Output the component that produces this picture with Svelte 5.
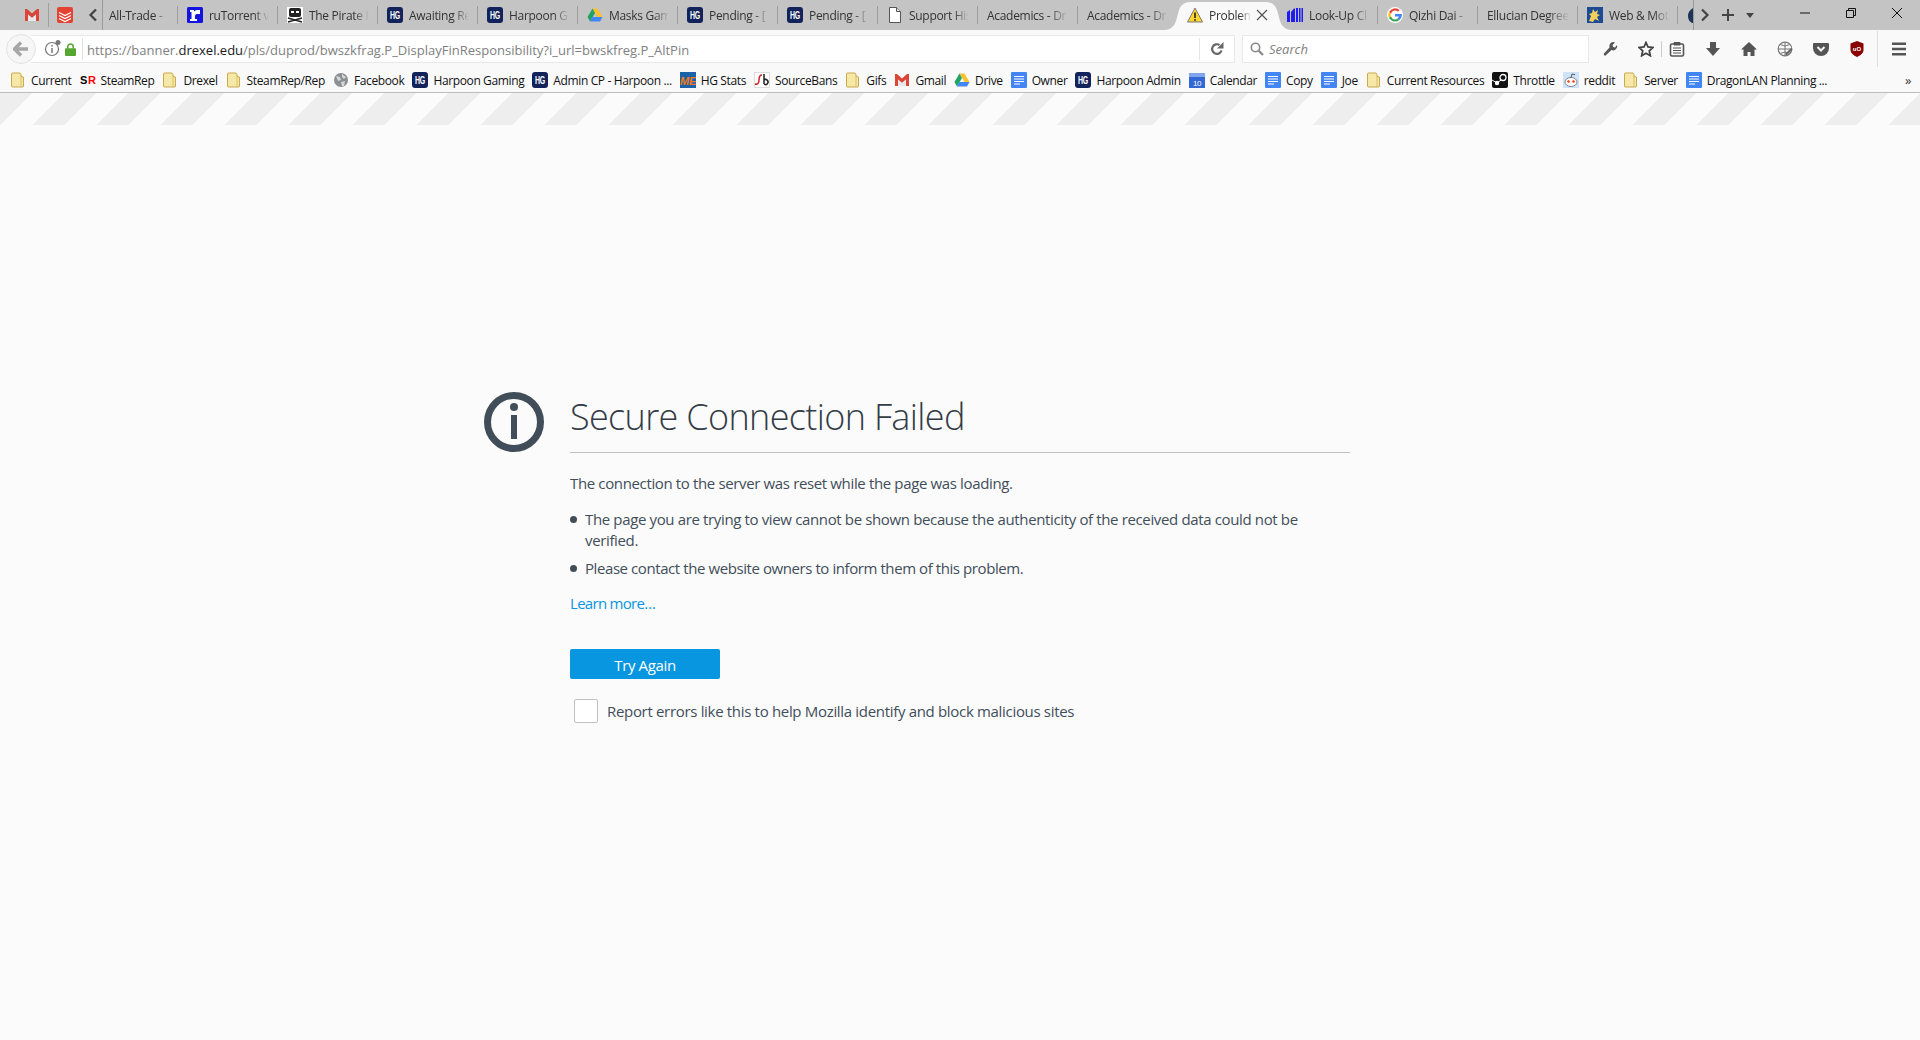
<script>
  const tabs = [
    { label: 'All-Trade - ', first: true },
    { icon: 'rutorrent', label: 'ruTorrent v' },
    { icon: 'pirate', label: 'The Pirate B' },
    { icon: 'hg', label: 'Awaiting Re' },
    { icon: 'hg', label: 'Harpoon G' },
    { icon: 'drive', label: 'Masks Gam' },
    { icon: 'hg', label: 'Pending - [' },
    { icon: 'hg', label: 'Pending - [' },
    { icon: 'page', label: 'Support His' },
    { label: 'Academics - Dr' },
    { label: 'Academics - Dr' },
    { icon: 'warn', label: 'Problem', active: true },
    { icon: 'lookup', label: 'Look-Up Cl' },
    { icon: 'google', label: 'Qizhi Dai - ' },
    { label: 'Ellucian Degree' },
    { icon: 'dragon', label: 'Web & Mot' },
    { icon: 'dark', label: '' }
  ];

  const bookmarks = [
    { icon: 'folder', label: 'Current' },
    { icon: 'sr', label: 'SteamRep' },
    { icon: 'folder', label: 'Drexel' },
    { icon: 'folder', label: 'SteamRep/Rep' },
    { icon: 'globe', label: 'Facebook' },
    { icon: 'hg', label: 'Harpoon Gaming' },
    { icon: 'hg', label: 'Admin CP - Harpoon ...' },
    { icon: 'me', label: 'HG Stats' },
    { icon: 'sb', label: 'SourceBans' },
    { icon: 'folder', label: 'Gifs' },
    { icon: 'gmail', label: 'Gmail' },
    { icon: 'drive', label: 'Drive' },
    { icon: 'doc', label: 'Owner' },
    { icon: 'hg', label: 'Harpoon Admin' },
    { icon: 'cal', label: 'Calendar' },
    { icon: 'doc', label: 'Copy' },
    { icon: 'doc', label: 'Joe' },
    { icon: 'folder', label: 'Current Resources' },
    { icon: 'steam', label: 'Throttle' },
    { icon: 'reddit', label: 'reddit' },
    { icon: 'folder', label: 'Server' },
    { icon: 'doc', label: 'DragonLAN Planning ...' }
  ];
</script>

{#snippet icon(kind)}
  <svg class="ico" viewBox="0 0 16 16" width="16" height="16">
    {#if kind === 'hg'}
      <rect width="16" height="16" rx="3" fill="#12235c" />
      <text x="8" y="12" font-size="11" font-weight="700" text-anchor="middle" fill="#fff" font-family="Liberation Sans" textLength="10" lengthAdjust="spacingAndGlyphs">HG</text>
    {:else if kind === 'folder'}
      <path d="M1.500 2a1 1 0 0 1 1-1h7.500l1 1.500v2l2.500.5v9a1 1 0 0 1-1 1h-10a1 1 0 0 1-1-1z" fill="#f6e8a6" stroke="#c9a94e" />
      <path d="M11 3v11.500" stroke="#d9bf6c" />
    {:else if kind === 'sr'}
      <text x="0" y="12" font-size="11" font-weight="700" fill="#000" font-family="Liberation Sans">S</text>
      <text x="8" y="12" font-size="11" font-weight="700" fill="#f00" font-family="Liberation Sans">R</text>
    {:else if kind === 'globe'}
      <circle cx="8" cy="8" r="7" fill="#8a8f94" />
      <path d="M3 4l4 1 1 3-3 1zM9 2l4 3-2 2-2-2zM8 10l4-1-1 5-2 0z" fill="#d5d7d9" />
    {:else if kind === 'me'}
      <rect width="16" height="16" fill="#1b62a8" />
      <text x="8" y="12.500" font-size="11" font-style="italic" font-weight="700" text-anchor="middle" fill="#f27a1a" font-family="Liberation Sans">ME</text>
    {:else if kind === 'sb'}
      <rect x=".5" y=".5" width="15" height="15" fill="#fff" stroke="#ddd" />
      <path d="M1 12q4 1 4-4t3-5" fill="none" stroke="#c22" stroke-width="1.500" />
      <path d="M10 2v10M10 8a2.500 2.500 0 1 1 0 4" fill="none" stroke="#222" stroke-width="1.500" />
    {:else if kind === 'gmail'}
      <path d="M1 2h2l5 4.500L13 2h2v12h-3V7.500L8 11 4 7.500V14H1z" fill="#db4437" />
      <path d="M4 7.500L8 11l4-3.500V14H4z" fill="#e8e8e8" />
    {:else if kind === 'drive'}
      <path d="M5.500 1.500h5l5 8.500h-5z" fill="#fbc02d" />
      <path d="M5.500 1.500L.5 10 3 14.500 8 6z" fill="#1fa463" />
      <path d="M5.500 10h10L13 14.500H3z" fill="#4285f4" />
    {:else if kind === 'doc'}
      <rect width="16" height="16" rx="1" fill="#4285f4" />
      <path d="M3 4.500h10M3 7h10M3 9.500h10M3 12h6" stroke="#fff" />
    {:else if kind === 'cal'}
      <rect y="1" width="16" height="15" fill="#3367d6" />
      <rect y="1" width="16" height="4" fill="#7fa6ec" />
      <text x="8" y="13.500" font-size="8" text-anchor="middle" fill="#fff" font-family="Liberation Sans">10</text>
    {:else if kind === 'steam'}
      <rect width="16" height="16" rx="2" fill="#111" />
      <circle cx="11" cy="5.500" r="3" fill="none" stroke="#fff" stroke-width="1.300" />
      <circle cx="5" cy="11" r="2.200" fill="#fff" />
      <path d="M0 8l5 3 4-3" fill="none" stroke="#fff" />
    {:else if kind === 'reddit'}
      <rect width="16" height="16" fill="#cee3f8" />
      <ellipse cx="8" cy="10" rx="6" ry="4.500" fill="#fff" stroke="#555" stroke-width=".7" />
      <circle cx="5.500" cy="9.500" r="1.200" fill="#f30" />
      <circle cx="10.500" cy="9.500" r="1.200" fill="#f30" />
      <path d="M8 5.500l1-3.500 3 .7" fill="none" stroke="#555" />
    {:else if kind === 'rutorrent'}
      <rect width="16" height="16" rx="1.500" fill="#1414e0" />
      <path d="M3 3h4v1.500q1-1.500 3-1.500h3v4h-3q-2 0-2 2v3h2v2H3v-2h1.500V5H3z" fill="#fff" />
    {:else if kind === 'pirate'}
      <rect width="16" height="16" fill="#fff" />
      <rect x="2" y="1" width="12" height="9" rx="2" fill="#222" />
      <rect x="4" y="4" width="3" height="2" fill="#fff" />
      <rect x="9" y="4" width="3" height="2" fill="#fff" />
      <path d="M1 11l14 4M15 11L1 15" stroke="#222" stroke-width="1.600" />
    {:else if kind === 'page'}
      <path d="M2.500.5h7l4 4v11h-11z" fill="#fff" stroke="#555" />
      <path d="M9.500.5v4h4" fill="#ddd" stroke="#555" />
    {:else if kind === 'warn'}
      <path d="M8 1l7.500 14H.5z" fill="#ffd52e" stroke="#777" />
      <path d="M8 5.500v5.500" stroke="#222" stroke-width="1.600" />
      <circle cx="8" cy="13" r=".9" fill="#222" />
    {:else if kind === 'lookup'}
      <path d="M0 5l3-2v12H0z" fill="#1d1df0" />
      <path d="M4 5l3-3.500h1V15H4z" fill="#1d1df0" />
      <path d="M9 1h2v14H9zM12 1h1.500v14H12zM14.500 1H16v14h-1.500z" fill="#1d1df0" />
    {:else if kind === 'google'}
      <circle cx="8" cy="8" r="8" fill="#fff" />
      <path d="M8 3.500a4.500 4.500 0 0 1 3 1.200L12.600 3A7 7 0 0 0 2 5l2 1.500A4.500 4.500 0 0 1 8 3.500z" fill="#ea4335" />
      <path d="M3.500 8c0-.5.100-1 .5-1.500L2 5a7 7 0 0 0 0 6l2-1.500c-.4-.5-.5-1-.5-1.500z" fill="#fbbc05" />
      <path d="M8 12.500A4.500 4.500 0 0 1 4 9.500L2 11a7 7 0 0 0 10.500 2l-2-1.500c-.6.600-1.500 1-2.500 1z" fill="#34a853" />
      <path d="M15 7H8v2.500h4c-.2.800-.8 1.500-1.500 2l2 1.500c1.500-1.300 2.500-3.500 2.500-6z" fill="#4285f4" />
    {:else if kind === 'dragon'}
      <rect width="16" height="16" fill="#1c4a94" />
      <path d="M2 14l2-5-2-2 3-1 1-4 2 3 3-2-1 4 3 1-3 2 2 4-4-2-2 3z" fill="#f3cf5c" />
    {:else if kind === 'dark'}
      <path d="M6 1q-5 3-5 8t4 7h6V1z" fill="#1d3557" />
    {:else if kind === 'todoist'}
      <rect width="16" height="16" rx="2" fill="#e44332" />
      <path d="M2 5.500l6 3 6-3M2 8.500l6 3 6-3M2 11.500l6 3 6-3" fill="none" stroke="#fff" stroke-width="1.200" />
    {/if}
  </svg>
{/snippet}

<div class="browser">
  <div class="tabbar">
    <div class="pinned">
      <span class="pin gmail">{@render icon('gmail')}</span>
      <span class="pin">{@render icon('todoist')}</span>
    </div>
    <svg class="scroll-arrow" viewBox="0 0 10 14" width="10" height="14"><path d="M8 1.500L2.500 7 8 12.500" fill="none" stroke="#444" stroke-width="2.200" /></svg>
    <div class="strip">
      {#each tabs as tab}
        <div class="tab" class:active={tab.active} class:first={tab.first}>
          {#if tab.active}
            <svg class="tab-shape" viewBox="0 0 128 30" width="128" height="30" preserveAspectRatio="none">
              <path d="M0 30q9 0 12-9l3-11q3-8 11-8h76q8 0 11 8l3 11q3 9 12 9z" fill="#f9f9f9" />
            </svg>
          {/if}
          {#if tab.icon}{@render icon(tab.icon)}{/if}
          <span class="tab-label">{tab.label}</span>
          {#if tab.active}
            <svg class="tab-close" viewBox="0 0 12 12" width="12" height="12"><path d="M1 1l10 10M11 1L1 11" stroke="#555" stroke-width="1.200" /></svg>
          {/if}
        </div>
      {/each}
    </div>
    <svg class="tab-ctl" viewBox="0 0 10 14" width="10" height="14"><path d="M2 1.500L7.500 7 2 12.500" fill="none" stroke="#444" stroke-width="2.200" /></svg>
    <svg class="tab-ctl plus" viewBox="0 0 14 14" width="14" height="14"><path d="M7 1v12M1 7h12" stroke="#444" stroke-width="2" /></svg>
    <svg class="tab-ctl caret" viewBox="0 0 8 5" width="8" height="5"><path d="M0 0h8L4 5z" fill="#444" /></svg>
    <div class="win-ctl">
      <svg viewBox="0 0 10 10" width="10" height="10"><path d="M0 5h10" stroke="#111" /></svg>
      <svg viewBox="0 0 10 10" width="10" height="10"><path d="M.5 2.500h7v7h-7zM2.500 2.500v-2h7v7h-2" fill="none" stroke="#111" /></svg>
      <svg viewBox="0 0 10 10" width="10" height="10"><path d="M0 0l10 10M10 0L0 10" stroke="#111" /></svg>
    </div>
  </div>

  <div class="navbar">
    <div class="back">
      <svg viewBox="0 0 16 16" width="16" height="16"><path d="M8 1.500L1.500 8 8 14.500M2 8h13" fill="none" stroke="#a6a6a6" stroke-width="3.400" /></svg>
    </div>
    <div class="urlbar">
      <svg class="site-info" viewBox="0 0 18 18" width="18" height="18">
        <circle cx="8" cy="10" r="6.500" fill="none" stroke="#777" stroke-width="1.200" />
        <path d="M8 9v5M8 6v1.600" stroke="#777" stroke-width="1.500" />
        <circle cx="14" cy="3.500" r="2.500" fill="#777" />
      </svg>
      <svg class="lock" viewBox="0 0 12 14" width="11" height="13">
        <rect y="5.500" width="12" height="8.500" rx="1" fill="#57a630" />
        <path d="M3 6V4a3 3 0 0 1 6 0v2" fill="none" stroke="#57a630" stroke-width="1.700" />
      </svg>
      <span class="url">https://banner.<b>drexel.edu</b>/pls/duprod/bwszkfrag.P_DisplayFinResponsibility?i_url=bwskfreg.P_AltPin</span>
      <span class="reload">
        <svg viewBox="0 0 14 14" width="14" height="14"><path d="M11.500 8.500A4.800 4.800 0 1 1 9.500 3" fill="none" stroke="#666" stroke-width="2.200" /><path d="M7 6.500h6.500V0z" fill="#666" /></svg>
      </span>
    </div>
    <div class="searchbar">
      <svg viewBox="0 0 14 14" width="14" height="14"><circle cx="5.500" cy="5.500" r="4.200" fill="none" stroke="#888" stroke-width="1.600" /><path d="M8.500 8.500l4.500 4.500" stroke="#888" stroke-width="2.200" /></svg>
      <span>Search</span>
    </div>
    <div class="tools">
      <svg class="t" viewBox="0 0 16 16" width="16" height="16"><path d="M1.500 13l6-6.500a4 4 0 0 1 5.500-5l-2.500 2.500.5 2 2 .5L15 4a4 4 0 0 1-5.500 5L3 15z" fill="#555" /></svg>
      <svg class="t star" viewBox="0 0 16 16" width="16" height="16"><path d="M8 1.500l2 4.500 5 .5-3.700 3.300 1 4.900L8 12.300l-4.300 2.400 1-4.900L1 6.500 6 6z" fill="none" stroke="#444" stroke-width="1.800" /></svg>
      <i class="tsep"></i>
      <svg class="t" viewBox="0 0 16 16" width="16" height="16"><rect x="1.500" y="3" width="13" height="12" rx="1.500" fill="none" stroke="#555" stroke-width="1.600" /><path d="M5 1.500h6V4H5zM4 7h8M4 9.500h8M4 12h8" fill="#555" stroke="#555" /></svg>
      <svg class="t" viewBox="0 0 16 16" width="16" height="16"><path d="M5 1h6v6h4l-7 8-7-8h4z" fill="#555" /></svg>
      <svg class="t" viewBox="0 0 16 16" width="16" height="16"><path d="M8 1L0 8.500h2.500V15h4v-4h3v4h4V8.500H16z" fill="#555" /></svg>
      <svg class="t" viewBox="0 0 16 16" width="16" height="16"><circle cx="8" cy="8" r="6.800" fill="none" stroke="#777" stroke-width="1.200" /><path d="M1 8h14M8 1v14M3 3.500q5 3 10 0M3 12.500q5-3 10 0" fill="none" stroke="#777" /><path d="M8 13l6-6 1.500 1.500-6 6z" fill="#666" /></svg>
      <svg class="t" viewBox="0 0 16 16" width="16" height="16"><path d="M1 2h14a1 1 0 0 1 1 1v4a8 8 0 0 1-16 0V3a1 1 0 0 1 1-1z" fill="#555" /><path d="M4.500 6L8 9.500 11.500 6" fill="none" stroke="#f9f9f9" stroke-width="2" /></svg>
      <svg class="t" viewBox="0 0 16 16" width="16" height="16"><path d="M8 0l6.500 2.500V9q0 4-6.500 7Q1.500 13 1.500 9V2.500z" fill="#800" /><text x="8" y="10" font-size="6" font-weight="700" text-anchor="middle" fill="#fff" font-family="Liberation Sans">uO</text></svg>
      <i class="tsep wide"></i>
      <svg class="t menu" viewBox="0 0 16 16" width="16" height="14"><path d="M0 2h16M0 8h16M0 14h16" stroke="#555" stroke-width="2.600" /></svg>
    </div>
  </div>

  <div class="bookmarks">
    {#each bookmarks as b}
      <div class="bm">{@render icon(b.icon)}<span>{b.label}</span></div>
    {/each}
    <span class="more">»</span>
  </div>

  <div class="stripes"></div>

  <main class="page">
    <div class="container">
      <div class="title-row">
        <svg class="big-info" viewBox="0 0 60 60" width="60" height="60">
          <circle cx="30" cy="30" r="26.500" fill="none" stroke="#414e5a" stroke-width="7" />
          <circle cx="30" cy="15" r="4" fill="#414e5a" />
          <rect x="27" y="23" width="6" height="24" fill="#414e5a" />
        </svg>
        <h1>Secure Connection Failed</h1>
      </div>
      <p class="lead">The connection to the server was reset while the page was loading.</p>
      <ul>
        <li>The page you are trying to view cannot be shown because the authenticity of the received data could not be verified.</li>
        <li class="tight">Please contact the website owners to inform them of this problem.</li>
      </ul>
      <a class="learn" href="#learn">Learn more…</a>
      <button class="retry">Try Again</button>
      <label class="report">
        <span class="box"></span>
        <span>Report errors like this to help Mozilla identify and block malicious sites</span>
      </label>
    </div>
  </main>
</div>

<style>
  :global(body) {
    margin: 0;
    background: #fbfbfb;
  }

  .browser {
    height: 1040px;
    overflow: hidden;
    font-family: "Open Sans", "Noto Sans", sans-serif;
    background: #fbfbfb;
  }

  .ico {
    flex-shrink: 0;
    display: block;
  }

  /* tab row */
  .tabbar {
    display: flex;
    align-items: center;
    height: 30px;
    background: #c4c4c4;
    position: relative;
  }

  .pinned {
    display: flex;
    align-items: center;
    padding-left: 24px;
    height: 24px;
  }

  .pin {
    padding-right: 8px;
    margin-right: 8px;
    border-right: 1px solid #a0a0a0;
    height: 24px;
    display: flex;
    align-items: center;
  }

  .pin:last-child {
    border-right: 0;
    padding-right: 0;
    margin-right: 0;
  }

  .scroll-arrow {
    margin-left: 15px;
    margin-right: 4px;
    flex-shrink: 0;
  }

  .strip {
    display: flex;
    width: 1592px;
    height: 30px;
    overflow: hidden;
    flex-shrink: 0;
    border-left: 1px solid #999;
    border-right: 1px solid #999;
    box-sizing: border-box;
  }

  .tab {
    position: relative;
    display: flex;
    align-items: center;
    gap: 6px;
    flex: 0 0 100px;
    min-width: 0;
    box-sizing: border-box;
    padding: 0 9px;
    font-size: 12px;
    letter-spacing: -0.3px;
    color: #333;
  }

  .tab::after {
    content: "";
    position: absolute;
    right: 0;
    top: 6px;
    bottom: 6px;
    width: 1px;
    background: #9c9c9c;
  }

  .tab.first {
    flex-basis: 75px;
    padding-left: 6px;
  }

  .tab.active::after,
  .tab:has(+ .active)::after {
    display: none;
  }

  .tab-shape {
    position: absolute;
    left: -14px;
    top: 0;
  }

  .tab-label {
    position: relative;
    flex: 1;
    min-width: 0;
    white-space: nowrap;
    overflow: hidden;
    -webkit-mask-image: linear-gradient(to right, #000 75%, transparent 100%);
    mask-image: linear-gradient(to right, #000 75%, transparent 100%);
  }

  .tab .ico {
    position: relative;
  }

  .tab-close {
    position: relative;
    flex-shrink: 0;
    margin-left: -1px;
    margin-right: 1px;
  }

  .tab-ctl {
    flex-shrink: 0;
    margin-left: 6px;
  }

  .tab-ctl.plus {
    margin-left: 11px;
  }

  .tab-ctl.caret {
    margin-left: 11px;
  }

  .win-ctl {
    display: flex;
    align-items: center;
    gap: 36px;
    margin-left: 46px;
    margin-top: -4px;
  }

  .win-ctl svg {
    display: block;
  }

  /* navigation row */
  .navbar {
    display: flex;
    align-items: center;
    height: 38px;
    background: #f9f9f9;
    padding-left: 6px;
  }

  .back {
    width: 30px;
    height: 30px;
    box-sizing: border-box;
    border: 1px solid #e2e2e2;
    border-radius: 50%;
    background: #f6f6f6;
    display: flex;
    align-items: center;
    justify-content: center;
    position: relative;
    z-index: 1;
    flex-shrink: 0;
  }

  .urlbar {
    display: flex;
    align-items: center;
    width: 1204px;
    height: 28px;
    margin-left: -5px;
    padding-left: 12px;
    box-sizing: border-box;
    background: #fff;
    border: 1px solid #e8e8e8;
    border-left: 0;
    font-size: 13px;
    color: #808080;
    flex-shrink: 0;
  }

  .site-info {
    margin-top: -3px;
    margin-left: 1px;
  }

  .lock {
    margin-left: 3px;
  }

  .url {
    margin-left: 6px;
    padding-left: 4px;
    border-left: 1px solid #e0e0e0;
    line-height: 22px;
    padding-top: 1px;
    box-sizing: border-box;
    height: 22px;
    flex: 1;
    white-space: nowrap;
  }

  .url b {
    font-weight: 400;
    color: #1a1a1a;
  }

  .reload {
    width: 34px;
    height: 22px;
    border-left: 1px solid #e4e4e4;
    display: flex;
    align-items: center;
    justify-content: center;
  }

  .searchbar {
    display: flex;
    align-items: center;
    gap: 5px;
    width: 347px;
    height: 28px;
    margin-left: 7px;
    padding-left: 7px;
    box-sizing: border-box;
    background: #fff;
    border: 1px solid #e8e8e8;
    font-size: 13px;
    font-style: italic;
    color: #808080;
    flex-shrink: 0;
  }

  .tools {
    display: flex;
    align-items: center;
    padding-left: 13px;
  }

  .t {
    flex-shrink: 0;
    margin-right: 20px;
  }

  .t.star {
    margin-right: 7px;
  }

  .tsep {
    width: 1px;
    height: 16px;
    background: #ccc;
    margin: 0 7px 0 0;
  }

  .tsep.wide {
    height: 36px;
    margin: 0 13px 0 -8px;
    background: #e0e0e0;
  }

  .menu {
    margin-right: 0;
  }

  /* bookmarks row */
  .bookmarks {
    display: flex;
    align-items: center;
    height: 24px;
    padding-left: 10px;
    background: #f9f9f9;
    border-bottom: 1px solid #bcbcbc;
    font-size: 12px;
    letter-spacing: -0.37px;
    color: #111;
    white-space: nowrap;
  }

  .bm {
    display: flex;
    align-items: center;
    gap: 5px;
    margin-right: 8px;
  }

  .more {
    margin-left: auto;
    margin-right: 9px;
    font-size: 13px;
    color: #333;
  }

  .stripes {
    height: 32px;
    background: repeating-linear-gradient(-45deg, #eeeeee 0, #eeeeee 22.6px, #fbfbfb 22.6px, #fbfbfb 45.25px);
  }

  /* error page */
  .page {
    padding-top: 267px;
  }

  .container {
    width: 780px;
    margin: 0 auto;
    color: #414e5a;
    font-size: 15px;
    letter-spacing: -0.36px;
  }

  .title-row {
    display: flex;
    align-items: center;
    height: 60px;
    border-bottom: 1px solid #c1c1c1;
  }

  .big-info {
    flex-shrink: 0;
    margin-left: -86px;
    margin-right: 26px;
  }

  h1 {
    margin: 0 0 12px;
    font-size: 36px;
    font-weight: 300;
    letter-spacing: -0.65px;
    color: #333c46;
  }

  .lead {
    margin: 20px 0 0;
    line-height: 21px;
  }

  ul {
    margin: 15px 0 0;
    padding: 0 0 0 15px;
    line-height: 21px;
    list-style: none;
  }

  li {
    position: relative;
    margin-bottom: 7px;
  }

  li.tight {
    letter-spacing: -0.42px;
  }

  li::before {
    content: "";
    position: absolute;
    left: -15px;
    top: 7px;
    width: 7px;
    height: 7px;
    border-radius: 50%;
    background: #414e5a;
  }

  .learn {
    display: block;
    margin-top: 14px;
    line-height: 21px;
    letter-spacing: -0.7px;
    color: #0996e0;
    text-decoration: none;
  }

  .retry {
    display: block;
    width: 150px;
    height: 30px;
    margin-top: 35px;
    padding-top: 2px;
    border: 0;
    border-radius: 2px;
    background: #0996e0;
    color: #fff;
    font: inherit;
    letter-spacing: inherit;
  }

  .report {
    display: flex;
    align-items: center;
    gap: 9px;
    margin-top: 20px;
    padding-left: 4px;
    letter-spacing: -0.32px;
  }

  .box {
    width: 22px;
    height: 22px;
    border: 1px solid #c1c1c1;
    border-radius: 2px;
    background: #fff;
  }
</style>
